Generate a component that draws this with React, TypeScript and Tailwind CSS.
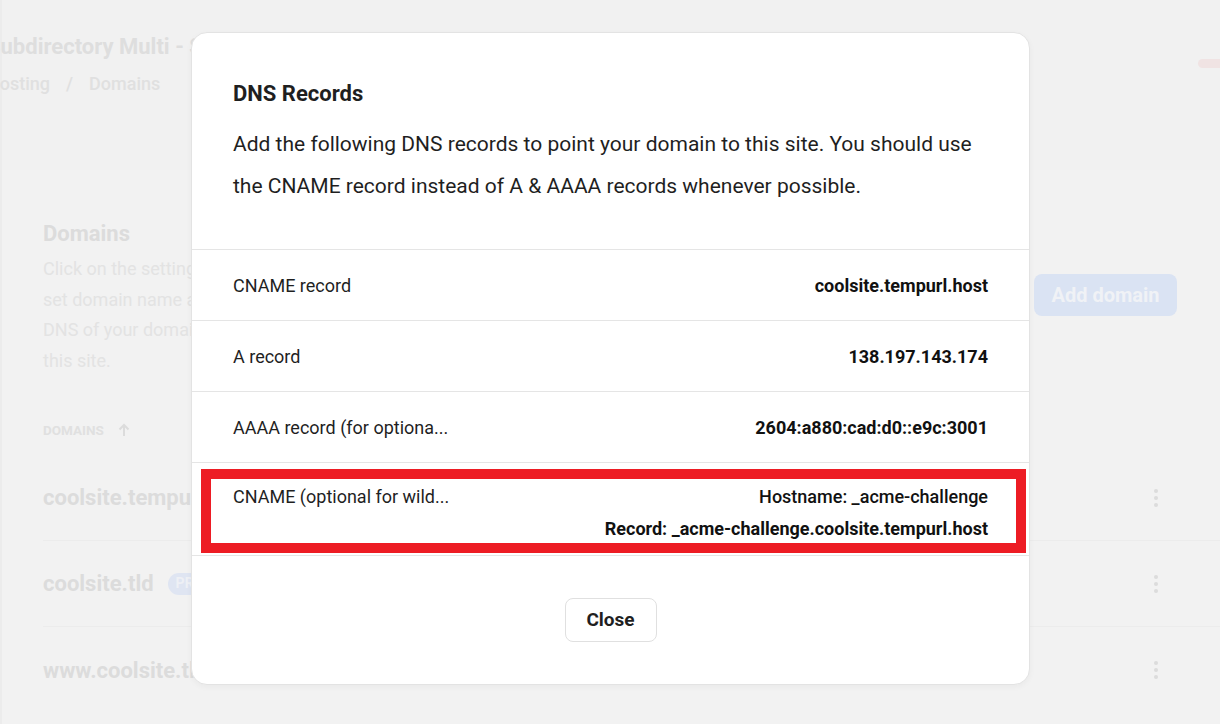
import React from 'react';

interface DnsRow {
  label: string;
  values: { text: string; bold: boolean }[];
}

const rows: DnsRow[] = [
  { label: 'CNAME record', values: [{ text: 'coolsite.tempurl.host', bold: true }] },
  { label: 'A record', values: [{ text: '138.197.143.174', bold: true }] },
  { label: 'AAAA record (for optiona...', values: [{ text: '2604:a880:cad:d0::e9c:3001', bold: true }] },
];

const Kebab: React.FC = () => (
  <div className="flex flex-col items-center gap-[3px]">
    <span className="block w-[4px] h-[4px] rounded-full bg-[#dcdcdc]" />
    <span className="block w-[4px] h-[4px] rounded-full bg-[#dcdcdc]" />
    <span className="block w-[4px] h-[4px] rounded-full bg-[#dcdcdc]" />
  </div>
);

const DomainRow: React.FC<{ name: string; primary?: boolean; last?: boolean }> = ({ name, primary, last }) => (
  <div className={`flex items-center justify-between h-[86px] pr-[62px] ${last ? '' : 'border-b border-[#ececec]'}`}>
    <div className="flex items-center gap-[14px]">
      <span className="text-[22px] font-bold text-[#dcdcdc]">{name}</span>
      {primary && (
        <span className="px-2 h-[22px] rounded-full bg-[#dfe5f2] text-[14px] font-bold text-[#eef0f5] flex items-center">PRIMARY</span>
      )}
    </div>
    <Kebab />
  </div>
);

// Background page, faded behind the modal
const Background: React.FC = () => (
  <div className="absolute inset-0 bg-[#f2f2f2] border-l-2 border-[#ececec]">
    <div className="h-[170px] bg-[#f1f1f1] flex justify-between">
      <div className="pt-[31px]">
        <div className="text-[22px] font-bold text-[#dedede] leading-8 ml-[-15px] whitespace-nowrap">Subdirectory Multi - Staging</div>
        <div className="mt-[9px] flex items-center gap-[16px] text-[18px] font-medium text-[#e0e0e0] leading-6 ml-[-15px]">
          <span>Hosting</span>
          <span>/</span>
          <span>Domains</span>
        </div>
      </div>
      <div className="pt-[59px]">
        <div className="w-[40px] h-[9px] rounded-full bg-[#f0e3e3] mr-[-18px]" />
      </div>
    </div>
    <div className="pl-[41px] pt-[50px]">
      <div className="flex justify-between pr-[43px]">
        <div className="w-[420px]">
          <div className="text-[22px] font-bold text-[#dcdcdc] leading-7">Domains</div>
          <p className="mt-[6px] text-[18px] text-[#e3e3e3] leading-[30.5px] whitespace-nowrap">
            Click on the settings icon<br />set domain name as primary<br />DNS of your domain to<br />this site.
          </p>
        </div>
        <button className="mt-[54px] h-[42px] w-[143px] rounded-lg bg-[#dae3f3] text-[20px] font-bold text-[#f0f2f6]">Add domain</button>
      </div>
      <div className="mt-[44px] flex items-center gap-[14px] text-[13.5px] font-bold text-[#e0e0e0] leading-5">
        DOMAINS
        <svg width="12" height="14" viewBox="0 0 12 14" fill="none" stroke="#dcdcdc" strokeWidth="2">
          <path d="M6 13V2M1.5 6.5L6 2l4.5 4.5" />
        </svg>
      </div>
      <div className="mt-[15px]">
        <DomainRow name="coolsite.tempurl.host" />
        <DomainRow name="coolsite.tld" primary />
        <DomainRow name="www.coolsite.tld" last />
      </div>
    </div>
  </div>
);

export default function App() {
  return (
    <div className="relative w-[1220px] h-[724px] overflow-hidden font-['Roboto',sans-serif]">
      <Background />
      <div className="absolute left-[191px] top-[32px] w-[839px] h-[653px] bg-white rounded-[16px] border border-[#e3e3e3] shadow-[0_2px_6px_rgba(0,0,0,0.04)] flex flex-col">
        <div className="px-[41px] pt-[47px] pb-[42px]">
          <h2 className="text-[22px] font-bold text-[#1f1f1f] leading-7">DNS Records</h2>
          <p className="mt-[15px] text-[21px] text-[#1f1f1f] leading-[42px]">
            Add the following DNS records to point your domain to this site. You should use the CNAME record instead of A &amp; AAAA records whenever possible.
          </p>
        </div>
        {rows.map((r) => (
          <div key={r.label} className="border-t border-[#e5e5e5] h-[71px] px-[41px] flex items-center justify-between text-[18px] text-[#1f1f1f]">
            <span>{r.label}</span>
            <span className="font-bold text-[#111]">{r.values[0].text}</span>
          </div>
        ))}
        <div className="relative border-t border-[#e5e5e5] h-[93px] px-[41px] pt-[22px] flex justify-between text-[18px] text-[#1f1f1f] leading-6">
          <span>CNAME (optional for wild...</span>
          <div className="flex flex-col items-end gap-[8px]">
            <span className="font-medium text-[#111]">Hostname: _acme-challenge</span>
            <span className="font-bold text-[#111]">Record: _acme-challenge.coolsite.tempurl.host</span>
          </div>
          {/* annotation box */}
          <div className="absolute left-[9px] top-[6px] w-[825px] h-[84px] border-[10px] border-[#ed1c24] pointer-events-none" />
        </div>
        <div className="border-t border-[#e5e5e5] flex-1 flex justify-center pt-[42px]">
          <button className="h-[44px] w-[92px] rounded-lg border border-[#e0e0e0] bg-white text-[19px] font-bold text-[#1f1f1f]">Close</button>
        </div>
      </div>
    </div>
  );
}
